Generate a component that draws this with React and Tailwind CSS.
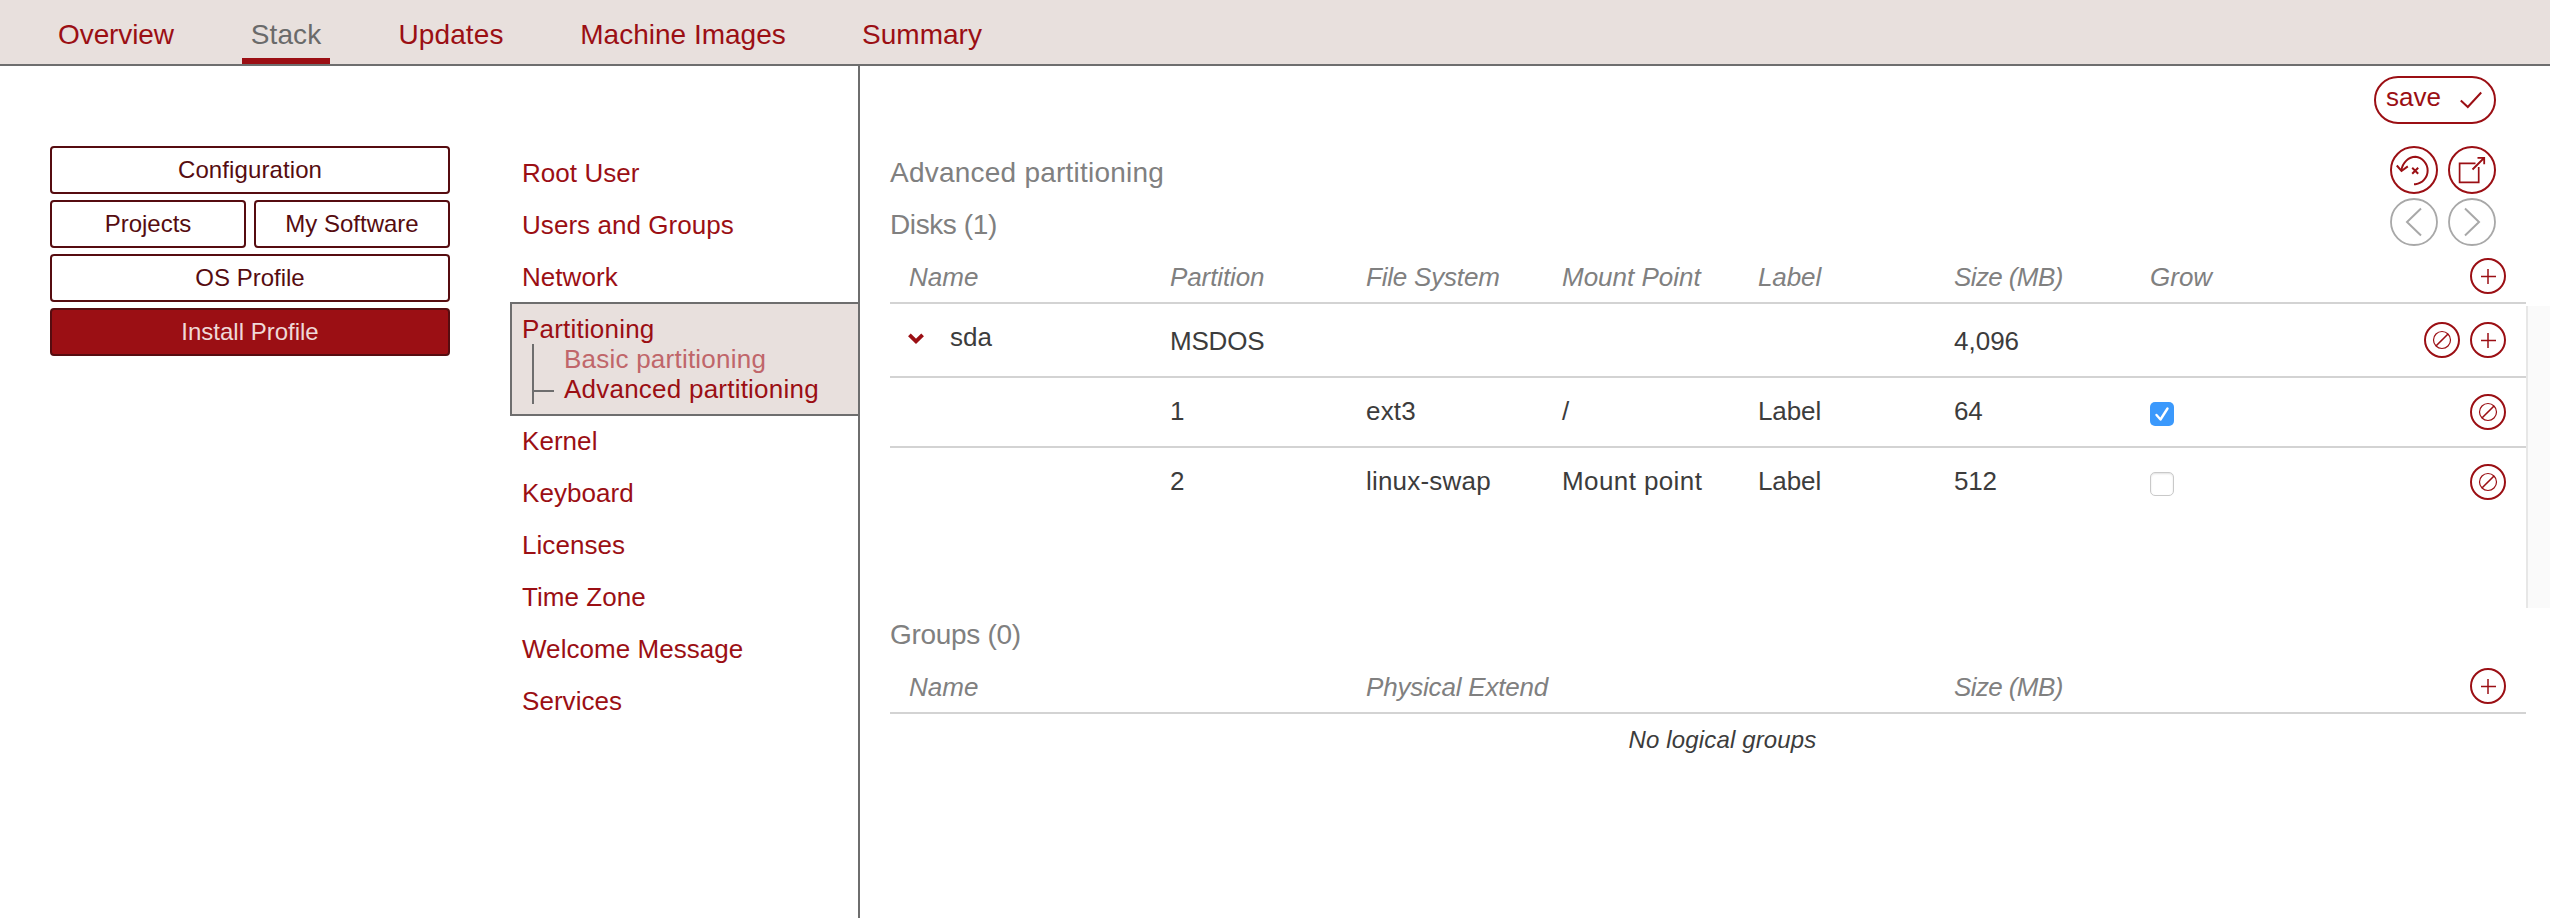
import React from "react";

const TABS = [
  { label: "Overview", box: "w-[132px] tracking-[-0.1px]" },
  { label: "Stack", box: "w-[88px] tracking-[0.1px]", active: true },
  { label: "Updates", box: "w-[122px] tracking-[0.1px]" },
  { label: "Machine Images", box: "w-[222px]" },
  { label: "Summary", box: "w-[136px]" },
];

const GRID = "grid grid-cols-[260px_196px_196px_196px_196px_196px_1fr] w-[1636px]";

function Stroke({ size, width = 2, children }) {
  return (
    <svg
      width={size}
      height={size}
      viewBox={`0 0 ${size} ${size}`}
      fill="none"
      stroke="currentColor"
      strokeWidth={width}
      className="block shrink-0"
    >
      {children}
    </svg>
  );
}

function AddButton() {
  return (
    <button aria-label="Add">
      <Stroke size={36}>
        <circle cx="18" cy="18" r="17" />
        <path d="M18 11v15M11 18.5h15" strokeWidth="1.5" />
      </Stroke>
    </button>
  );
}

function RemoveButton() {
  return (
    <button aria-label="Remove">
      <Stroke size={36}>
        <circle cx="18" cy="18" r="17" />
        <circle cx="18" cy="18" r="8.5" strokeWidth="1.2" />
        <path d="M12.2 23.8L24 12" strokeWidth="1.6" />
      </Stroke>
    </button>
  );
}

function UndoIcon() {
  return (
    <Stroke size={48}>
      <circle cx="24" cy="24" r="23" />
      <path d="M11.5 24C12.6 16.6 18.6 10.8 25.5 10.8a13.8 13.8 0 0 1 0 27.4H24" />
      <path d="M6.8 19.5L11.5 25l6.3-4.6" />
      <path d="M22.2 21.7l6 6M28.2 21.7l-6 6" />
    </Stroke>
  );
}

function ExportIcon() {
  return (
    <Stroke size={48}>
      <circle cx="24" cy="24" r="23" />
      <path d="M27.5 17.3H11.6v19.1h19.1V21" strokeWidth="1.7" />
      <path d="M24.5 23.5L36 12M29.5 11.8h6.7v6.4" strokeWidth="1.8" />
    </Stroke>
  );
}

function ArrowIcon({ d }) {
  return (
    <Stroke size={48}>
      <circle cx="24" cy="24" r="23" strokeWidth="1.8" />
      <path d={d} />
    </Stroke>
  );
}

function SideButton({ children, active }) {
  return (
    <button
      className={
        "flex h-12 flex-1 items-center justify-center rounded-[4px] border-2 border-[#560c10] text-[24px] leading-none " +
        (active ? "bg-[#9b0f14] text-[#efd9d8]" : "bg-white text-[#560c10]")
      }
    >
      {children}
    </button>
  );
}

function MenuItem({ children }) {
  return <a className="block h-[52px] pt-[2px] pl-3 leading-[50px] tracking-[0.05px]">{children}</a>;
}

function Checkbox({ checked }) {
  if (!checked) {
    return (
      <span className="block size-6 rounded-[5px] border border-[#c9c9c9] bg-white shadow-[inset_0_1px_2px_rgba(0,0,0,0.12)]" />
    );
  }
  return (
    <span className="block size-6 rounded-[5px] bg-[#3b99fc] text-white">
      <Stroke size={24} width={2.4}>
        <path d="M6.5 13L10.5 17.5L17.5 6.5" strokeLinecap="round" strokeLinejoin="round" />
      </Stroke>
    </span>
  );
}

function TableHead({ children }) {
  return (
    <div className={GRID + " h-[54px] border-b-2 border-[#d3d3d3] leading-[54px] text-[#808080] italic"}>
      {children}
    </div>
  );
}

function HeadAction() {
  return (
    <div className="flex items-start justify-end pt-2 pr-5 leading-none text-[#9b0f14] not-italic">
      <AddButton />
    </div>
  );
}

function PartitionRow({ number, fs, mount, size, grow, last }) {
  return (
    <div
      className={
        GRID + " h-[70px] leading-[66px] " + (last ? "" : "border-b-2 border-[#d3d3d3]")
      }
    >
      <div />
      <div className="pl-5">{number}</div>
      <div className="pl-5 tracking-[0.2px]">{fs}</div>
      <div className="pl-5 tracking-[0.4px]">{mount}</div>
      <div className="pl-5 tracking-[-0.1px]">Label</div>
      <div className="pl-5 tracking-[-0.2px]">{size}</div>
      <div className="flex items-start justify-between pr-5 pl-5">
        <div className="pt-6">
          <Checkbox checked={grow} />
        </div>
        <div className="pt-4 leading-none text-[#9b0f14]">
          <RemoveButton />
        </div>
      </div>
    </div>
  );
}

export default function App() {
  return (
    <div className="flex h-[918px] w-[2550px] flex-col overflow-hidden bg-white font-['Liberation_Sans',Arial,sans-serif] text-[26px] text-[#3c3c3c]">
      <nav className="flex h-[66px] shrink-0 gap-[60px] border-b-2 border-[#6e6e6e] bg-[#e8e0dd] pl-[50px] text-[28px]">
        {TABS.map((t) => (
          <a
            key={t.label}
            className={
              "h-16 border-b-[6px] pt-[11px] text-center leading-[48px] whitespace-nowrap " +
              t.box +
              (t.active ? " border-[#9b0f14] text-[#6a6a6a]" : " border-transparent text-[#9b0f14]")
            }
          >
            {t.label}
          </a>
        ))}
      </nav>

      <div className="flex flex-1">
        <aside className="flex w-[510px] shrink-0 flex-col gap-1.5 pt-20 pr-[60px] pl-[50px]">
          <div className="flex tracking-[0.1px]"><SideButton>Configuration</SideButton></div>
          <div className="flex gap-2">
            <SideButton>Projects</SideButton>
            <SideButton>My Software</SideButton>
          </div>
          <div className="flex"><SideButton>OS Profile</SideButton></div>
          <div className="flex"><SideButton active>Install Profile</SideButton></div>
        </aside>

        <div className="w-[350px] shrink-0 border-r-2 border-[#6e6e6e] pt-20 text-[#9b0f14]">
          <MenuItem>Root User</MenuItem>
          <MenuItem>Users and Groups</MenuItem>
          <MenuItem>Network</MenuItem>
          <div className="h-[114px] border-2 border-r-0 border-[#6e6e6e] bg-[#e8e0dd] pt-[10px] pl-[9px] leading-[30px]">
            <div className="pl-px tracking-[0.2px]">Partitioning</div>
            <div className="ml-[11px] flex h-[60px] border-l-2 border-[#6e6e6e]">
              <div className="h-12 w-5 border-b-2 border-[#6e6e6e]" />
              <div className="pl-[10px] tracking-[0.23px]">
                <div className="text-[#c0666a]">Basic partitioning</div>
                <div>Advanced partitioning</div>
              </div>
            </div>
          </div>
          <div className="-mt-0.5">
            <MenuItem>Kernel</MenuItem>
            <MenuItem>Keyboard</MenuItem>
            <MenuItem>Licenses</MenuItem>
            <MenuItem>Time Zone</MenuItem>
            <MenuItem>Welcome Message</MenuItem>
            <MenuItem>Services</MenuItem>
          </div>
        </div>

        <main className="flex flex-1 flex-col pl-[30px]">
          <div className="flex h-20 justify-end pt-[10px] pr-[54px] text-[#9b0f14]">
            <button className="flex h-12 w-[122px] justify-between rounded-full border-2 border-[#9b0f14] pr-3 pl-[10px]">
              <span className="leading-[38px]">save</span>
              <svg width="22" height="44" viewBox="0 0 22 44" fill="none" stroke="currentColor" strokeWidth="2">
                <path d="M0.8 22.5L7.8 29L21.2 14.5" />
              </svg>
            </button>
          </div>

          <div className="flex h-[52px] justify-between pr-[54px] text-[28px] leading-[54px] text-[#808080]">
            <h1 className="tracking-[0.23px]">Advanced partitioning</h1>
            <div className="flex gap-[10px] text-[#9b0f14]">
              <UndoIcon />
              <ExportIcon />
            </div>
          </div>
          <div className="flex h-[52px] justify-between pr-[54px] text-[28px] leading-[54px] text-[#808080]">
            <h2 className="tracking-[-0.4px]">Disks (1)</h2>
            <div className="flex gap-[10px] text-[#a8a8a8]">
              <ArrowIcon d="M31 10.5L17 24L31 37.5" />
              <ArrowIcon d="M17 10.5L31 24L17 37.5" />
            </div>
          </div>

          <TableHead>
            <div className="pl-[19px]">Name</div>
            <div className="pl-5 tracking-[-0.1px]">Partition</div>
            <div className="pl-5 tracking-[-0.2px]">File System</div>
            <div className="pl-5">Mount Point</div>
            <div className="pl-5 tracking-[-0.1px]">Label</div>
            <div className="pl-5 tracking-[-0.6px]">Size (MB)</div>
            <div className="flex justify-between">
              <span className="pl-5">Grow</span>
              <HeadAction />
            </div>
          </TableHead>

          <div className="flex h-[304px]">
            <div>
              <div className={GRID + " h-[74px] border-b-2 border-[#d3d3d3] leading-[74px]"}>
                <div className="flex items-start pl-[18px]">
                  <svg width="16" height="12" viewBox="0 0 16 12" fill="none" stroke="#9b0f14" strokeWidth="3.8" className="mt-[29px]">
                    <path d="M1.4 1.8L8 8.4L14.6 1.8" />
                  </svg>
                  <span className="pl-[26px] leading-[66px]">sda</span>
                </div>
                <div className="pl-5 tracking-[-0.2px]">MSDOS</div>
                <div />
                <div />
                <div />
                <div className="pl-5">4,096</div>
                <div className="flex items-start justify-end gap-[10px] pt-[18px] pr-5 leading-none text-[#9b0f14]">
                  <RemoveButton />
                  <AddButton />
                </div>
              </div>
              <PartitionRow number="1" fs="ext3" mount="/" size="64" grow />
              <PartitionRow number="2" fs="linux-swap" mount="Mount point" size="512" last />
            </div>
            <div className="mt-0.5 w-6 border-l-2 border-[#e7e7e7] bg-[#fafafa]" />
          </div>

          <h2 className="h-[52px] text-[28px] leading-[54px] tracking-[-0.3px] text-[#808080]">Groups (0)</h2>
          <TableHead>
            <div className="pl-[19px]">Name</div>
            <div />
            <div className="col-span-3 pl-5 tracking-[-0.2px]">Physical Extend</div>
            <div className="pl-5 tracking-[-0.6px]">Size (MB)</div>
            <HeadAction />
          </TableHead>
          <div className="w-[1636px] pl-[29px] text-center text-[24px] leading-[52px] tracking-[0.15px] italic">
            No logical groups
          </div>
        </main>
      </div>
    </div>
  );
}
